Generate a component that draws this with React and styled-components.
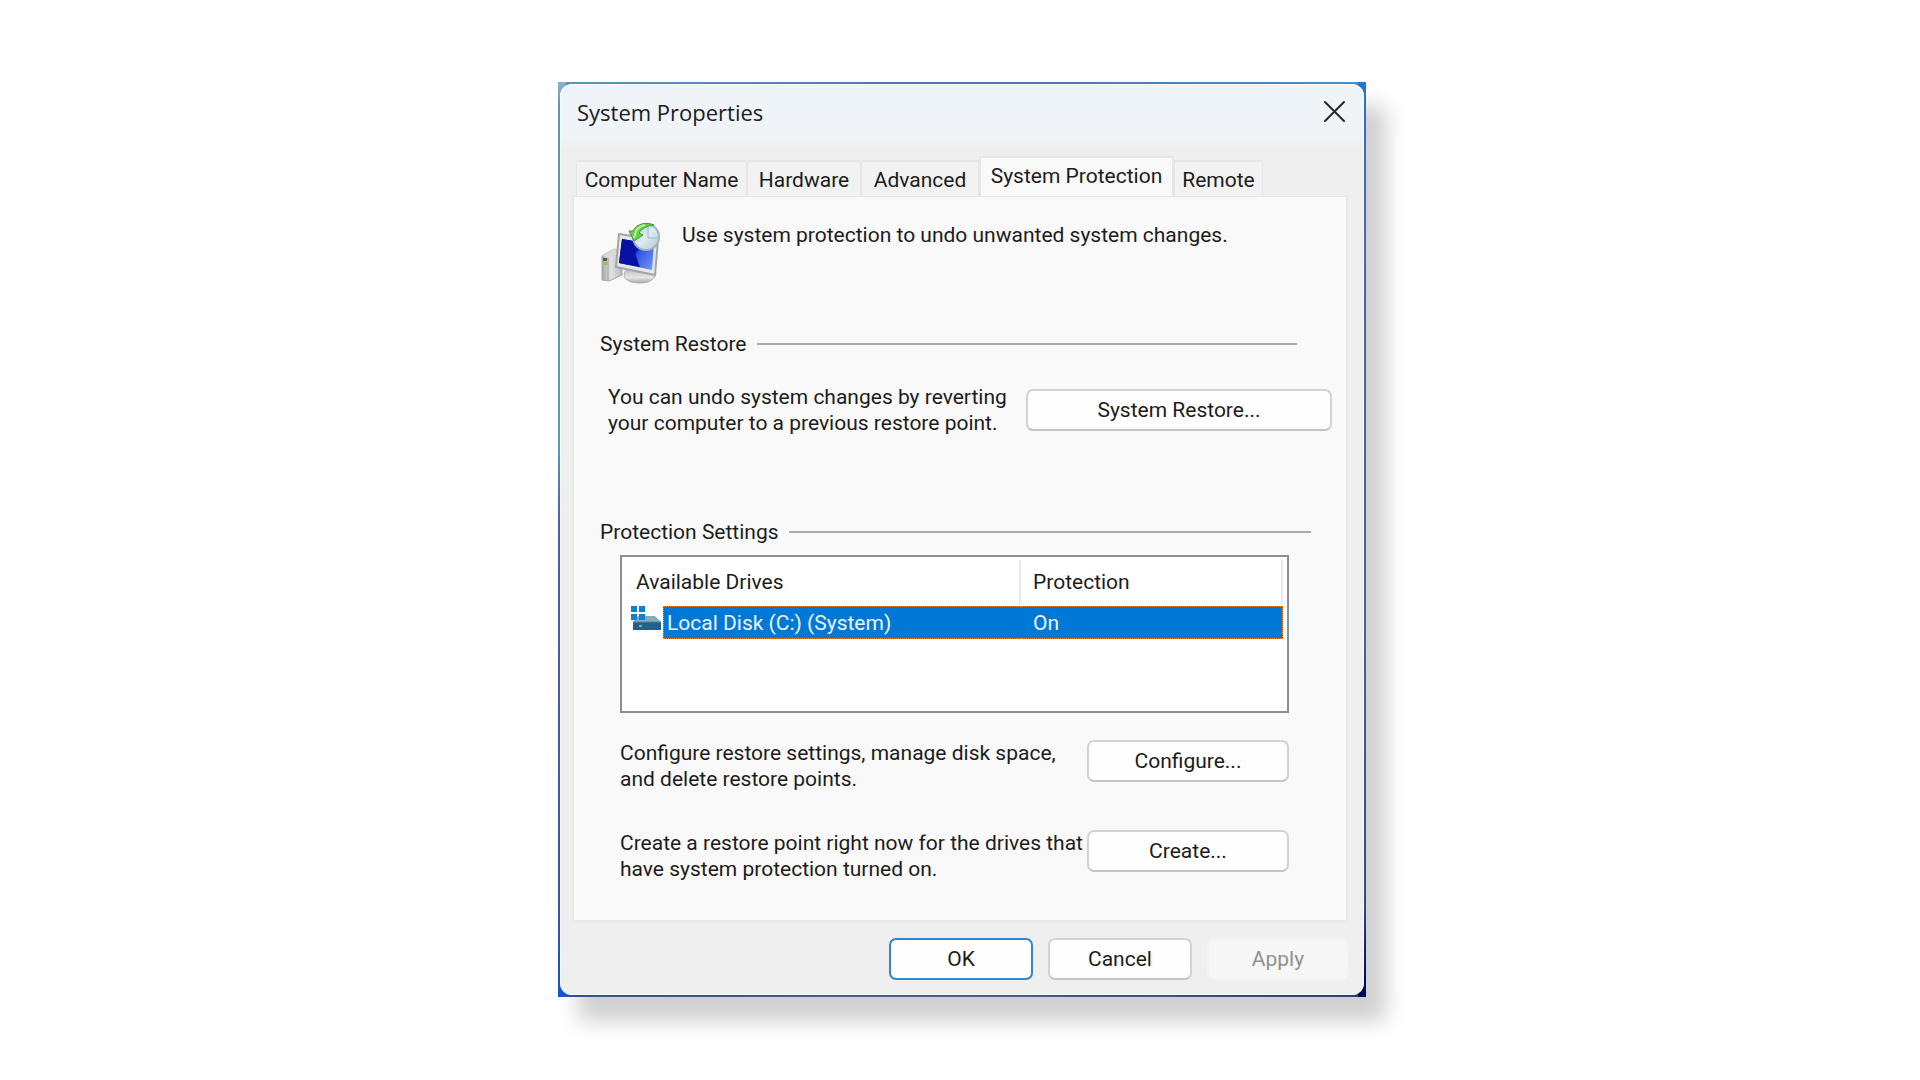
import React, { useState } from "react";
import styled, { createGlobalStyle } from "styled-components";

const GlobalStyle = createGlobalStyle`
  *, *::before, *::after { box-sizing: border-box; }
  body { margin: 0; background: #ffffff; }
  button { font: inherit; color: inherit; margin: 0; }
`;

const Page = styled.main`
  display: flex;
  justify-content: center;
  padding: 82px 0 80px 4px;
  font: 21px/26px Roboto, "Liberation Sans", sans-serif;
  color: #1c1c20;
`;

const Frame = styled.div`
  width: 808px;
  max-width: 100%;
  padding: 2px;
  background:
    linear-gradient(180deg, #8fb3c8 0, #5d94ba 24px, #5a96bc 40%, #4a5fae 48%, #4152a4 90%, #1653cc 98%) 0 0 / 8px 100% no-repeat,
    linear-gradient(180deg, #1b78e2 0, #2f70c4 24px, #4866a4 20%, #43639a 60%, #2f4a86 90%, #000b58 98%) 100% 0 / 8px 100% no-repeat,
    linear-gradient(90deg, #5d94ba, #4c76ae 50%, #4f8cc4) 0 0 / 100% 50% no-repeat,
    linear-gradient(90deg, #2f5290, #45618f 50%, #26417c) 0 100% / 100% 50% no-repeat;
  box-shadow: 20px 24px 20px rgba(0, 0, 0, 0.19);
`;

const Window = styled.section`
  display: flex;
  flex-direction: column;
  border-radius: 12px;
  background: linear-gradient(180deg, #eff4f9 0, #f0f4f8 52px, #efefef 64px);
  box-shadow: inset 0 0 0 1px rgba(255, 255, 255, 0.7);
`;

const TitleBar = styled.header`
  display: flex;
  align-items: center;
  justify-content: space-between;
  height: 56px;
  padding: 0 16px 0 17px;
`;

const Title = styled.h1`
  margin: 0;
  font: 400 22px/30px "Open Sans", "Noto Sans", sans-serif;
`;

const CloseButton = styled.button`
  display: flex;
  padding: 2px;
  border: 0;
  background: none;
`;

const Tabs = styled.div`
  display: flex;
  align-items: flex-end;
  padding: 16px 16px 0;
`;

const Tab = styled.button`
  width: ${(p) => p.$width}px;
  height: ${(p) => (p.$active ? 40 : 36)}px;
  padding: ${(p) => (p.$active ? "0 0 2px" : "2px 0 0")};
  border: solid #e6e6e6;
  border-width: 2px ${(p) => (p.$active ? 2 : 1)}px 0;
  background: ${(p) => (p.$active ? "#f9f9f9" : "#f2f2f2")};
  white-space: nowrap;
`;

const Panel = styled.div`
  display: flex;
  flex-direction: column;
  margin: 0 16px 0 12px;
  padding: 25px 14px 38px 26px;
  border: 2px solid #e7e7e7;
  border-top-width: 1px;
  background: #f9f9f9;
`;

const Intro = styled.div`
  display: flex;
  gap: 20px;
  margin-bottom: 47px;
`;

const Text = styled.p`
  margin: 0;
`;

const GroupTitle = styled.h2`
  display: flex;
  align-items: center;
  gap: 10px;
  margin: 0 ${(p) => p.$inset}px 0 0;
  font: inherit;

  &::after {
    content: "";
    flex: 1;
    height: 2px;
    background: #acacac;
  }
`;

const RestoreRow = styled.div`
  display: flex;
  align-items: center;
  justify-content: space-between;
  margin: 27px 0 83px;
  padding-left: 8px;
`;

const Settings = styled.div`
  display: flex;
  flex-direction: column;
  padding: 10px 43px 0 20px;
`;

const ActionRow = styled.div`
  display: flex;
  align-items: flex-start;
  justify-content: space-between;
  margin-top: ${(p) => p.$gap}px;
`;

const PushButton = styled.button`
  flex: none;
  width: ${(p) => p.$width}px;
  height: 42px;
  padding: 0;
  border: 2px solid ${(p) => (p.$primary ? "#2f87c8" : "#d2d2d2")};
  border-bottom-color: ${(p) => (p.$primary ? "#2f87c8" : "#c4c4c4")};
  border-radius: 7px;
  background: #fefefe;

  &:disabled {
    border-color: #f3f3f3;
    background: #f7f7f7;
    color: #909090;
  }
`;

const DriveList = styled.div`
  height: 158px;
  padding-right: 4px;
  border: 2px solid #8b8e92;
  background: #ffffff;
`;

const DriveTable = styled.table`
  width: 100%;
  border-spacing: 0;
  table-layout: fixed;
`;

const IconColumn = styled.col`
  width: 41px;
`;

const StateColumn = styled.col`
  width: 262px;
`;

const HeaderCell = styled.th`
  padding: 3px 0 2px;
  font-weight: 400;
  text-align: left;
`;

const HeaderLabel = styled.div`
  padding: 9px 12px 9px ${(p) => p.$indent}px;
  border-right: 2px solid #e8e8e8;
`;

const IconCell = styled.td`
  padding: 0 0 0 9px;
  vertical-align: top;

  svg { display: block; }
`;

const DriveCell = styled.td`
  height: 33px;
  padding: 0 0 0 ${(p) => p.$indent}px;
  border: 1px dotted #ff8728;
  border-left-width: ${(p) => (p.$first ? 1 : 0)}px;
  border-right-width: ${(p) => (p.$first ? 0 : 1)}px;
  background: #0078d7;
  color: #eef6fd;
`;

const Footer = styled.footer`
  display: flex;
  justify-content: flex-end;
  gap: 15px;
  padding: 16px 15px 15px;
`;

const CloseIcon = () => (
  <svg width="24" height="24" viewBox="0 0 24 24" aria-hidden="true">
    <path d="M3 2 L22 21 M22 2 L3 21" stroke="#26282c" strokeWidth="2" strokeLinecap="round" />
  </svg>
);

const RestoreIcon = () => (
  <svg width="62" height="62" viewBox="0 0 62 62" aria-hidden="true">
    <defs>
      <linearGradient id="tower" x1="0" x2="1">
        <stop offset="0" stopColor="#a2a6a4" />
        <stop offset="0.45" stopColor="#e2e4e4" />
        <stop offset="1" stopColor="#b4b6b8" />
      </linearGradient>
      <linearGradient id="screen" x1="0" x2="1" y1="0.2" y2="0.8">
        <stop offset="0" stopColor="#0a1aa0" />
        <stop offset="0.45" stopColor="#0b12c0" />
        <stop offset="0.5" stopColor="#2c50dc" />
        <stop offset="1" stopColor="#6a92f4" />
      </linearGradient>
      <linearGradient id="stand" x1="0" x2="0" y1="0" y2="1">
        <stop offset="0" stopColor="#b8babc" />
        <stop offset="0.6" stopColor="#e6e6e6" />
        <stop offset="1" stopColor="#a6a8a8" />
      </linearGradient>
      <linearGradient id="clock" x1="0" x2="1" y1="0" y2="1">
        <stop offset="0" stopColor="#a8cfe2" />
        <stop offset="0.5" stopColor="#dcebf5" />
        <stop offset="1" stopColor="#b4c6d4" />
      </linearGradient>
    </defs>
    <path d="M2 34 L14 27 L22 30 V53 L9 59 L2 58 Z" fill="url(#tower)" stroke="#a4a7a7" />
    <path d="M2 34 L14 27 L22 30 L8 36 Z" fill="#d8dada" />
    <path d="M8 36 V58" stroke="#9fa2a2" />
    <rect x="3" y="36" width="4" height="3" fill="#50604c" />
    <rect x="3" y="40" width="4" height="3" fill="#8bcf3e" />
    <path d="M28 47 L47 50 L56 51 C55 58 48 61 40 61 C31 61 25 58 24 54 C24 50 26 48 28 47 Z" fill="url(#stand)" stroke="#a9abad" />
    <path d="M19 12 L58 18 L55 53 L16 45 Z" fill="#e5e7e9" stroke="#a2a5a9" strokeWidth="2" strokeLinejoin="round" />
    <path d="M22 17 L54 22 L52 48 L19 41 Z" fill="url(#screen)" />
    <path d="M22 17 L33 19 C34 27 36 36 40 45 L19 41 Z" fill="#0712a4" />
    <circle cx="46" cy="15" r="13" fill="url(#clock)" stroke="#9fb4bc" strokeWidth="2" />
    <path d="M48 5 V16 H57" fill="none" stroke="#9db4c4" strokeWidth="1" />
    <path d="M54 3 C47 0 37 1 33 9 L29 9 L34 19 L43 13 L39 11 C42 6 47 4 54 3 Z" fill="#66d04e" stroke="#3d9a35" />
    <path d="M34 16 L36 9 C38 5 41 4 45 3" fill="none" stroke="#b4f29b" strokeWidth="2" />
  </svg>
);

const DriveIcon = () => (
  <svg width="30" height="25" viewBox="0 0 30 25" aria-hidden="true">
    <path d="M7 10 H24 L30 16 H2 Z" fill="#8aa9bd" />
    <rect x="2" y="16" width="28" height="8" fill="#285f86" />
    <path d="M2 16 H30" stroke="#4f86a6" />
    <rect x="8" y="19" width="3" height="2" fill="#3fd08a" />
    <path d="M0 0 h6 v6 h-6 Z M8 0 h6 v6 h-6 Z M0 8 h6 v6 h-6 Z M8 8 h6 v6 h-6 Z" fill="#1380cc" />
  </svg>
);

const tabs = [
  { name: "Computer Name", width: 171 },
  { name: "Hardware", width: 114 },
  { name: "Advanced", width: 118 },
  { name: "System Protection", width: 195 },
  { name: "Remote", width: 89 },
];

export default function App() {
  const [active, setActive] = useState("System Protection");

  return (
    <Page>
      <GlobalStyle />
      <Frame>
        <Window aria-labelledby="window-title">
          <TitleBar>
            <Title id="window-title">System Properties</Title>
            <CloseButton type="button" aria-label="Close">
              <CloseIcon />
            </CloseButton>
          </TitleBar>
          <Tabs role="tablist">
            {tabs.map(({ name, width }) => (
              <Tab
                key={name}
                type="button"
                role="tab"
                aria-selected={name === active}
                $active={name === active}
                $width={width}
                onClick={() => setActive(name)}
              >
                {name}
              </Tab>
            ))}
          </Tabs>
          <Panel role="tabpanel">
            <Intro>
              <RestoreIcon />
              <Text>Use system protection to undo unwanted system changes.</Text>
            </Intro>

            <GroupTitle $inset={35}>System Restore</GroupTitle>
            <RestoreRow>
              <Text>
                You can undo system changes by reverting
                <br />
                your computer to a previous restore point.
              </Text>
              <PushButton type="button" $width={306}>System Restore...</PushButton>
            </RestoreRow>

            <GroupTitle $inset={21}>Protection Settings</GroupTitle>
            <Settings>
              <DriveList>
                <DriveTable>
                  <colgroup>
                    <IconColumn />
                    <col />
                    <StateColumn />
                  </colgroup>
                  <thead>
                    <tr>
                      <HeaderCell colSpan={2} scope="col">
                        <HeaderLabel $indent={14}>Available Drives</HeaderLabel>
                      </HeaderCell>
                      <HeaderCell scope="col">
                        <HeaderLabel $indent={12}>Protection</HeaderLabel>
                      </HeaderCell>
                    </tr>
                  </thead>
                  <tbody>
                    <tr>
                      <IconCell><DriveIcon /></IconCell>
                      <DriveCell $first $indent={3}>Local Disk (C:) (System)</DriveCell>
                      <DriveCell $indent={12}>On</DriveCell>
                    </tr>
                  </tbody>
                </DriveTable>
              </DriveList>

              <ActionRow $gap={27}>
                <Text>
                  Configure restore settings, manage disk space,
                  <br />
                  and delete restore points.
                </Text>
                <PushButton type="button" $width={202}>Configure...</PushButton>
              </ActionRow>
              <ActionRow $gap={38}>
                <Text>
                  Create a restore point right now for the drives that
                  <br />
                  have system protection turned on.
                </Text>
                <PushButton type="button" $width={202}>Create...</PushButton>
              </ActionRow>
            </Settings>
          </Panel>
          <Footer>
            <PushButton type="button" $width={144} $primary>OK</PushButton>
            <PushButton type="button" $width={144}>Cancel</PushButton>
            <PushButton type="button" $width={142} disabled>Apply</PushButton>
          </Footer>
        </Window>
      </Frame>
    </Page>
  );
}
